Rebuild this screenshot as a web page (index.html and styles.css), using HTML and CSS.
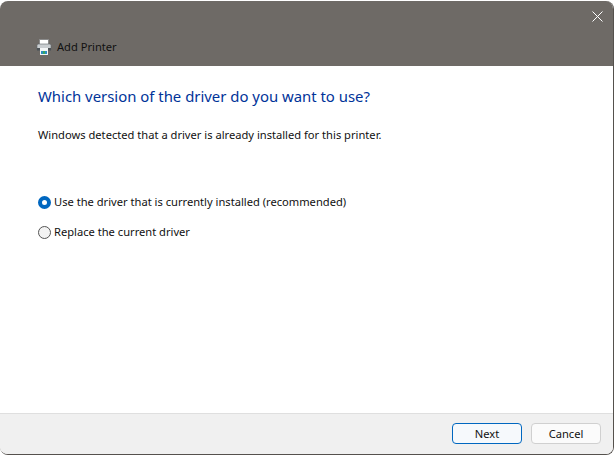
FILE: index.html
```html
<!DOCTYPE html>
<html lang="en">
<head>
<meta charset="utf-8">
<title>Add Printer</title>
<link rel="stylesheet" href="styles.css">
</head>
<body>
<div class="window">
  <header class="titlebar">
    <button class="close" aria-label="Close">
      <svg width="11" height="11" viewBox="0 0 11 11"><path d="M0.5 0.5L10.5 10.5M10.5 0.5L0.5 10.5" stroke="#fff" stroke-width="1" fill="none"/></svg>
    </button>
    <div class="title">
      <svg class="printer" width="16" height="16" viewBox="0 0 16 16">
        <rect x="3.5" y="0.5" width="9" height="5" fill="#fff" stroke="#8a8a8a"/>
        <path d="M1 6.5Q1 5 2.5 5H13.5Q15 5 15 6.5V11H1Z" fill="#c9cdd0" stroke="#5f6468" stroke-width="0.6"/>
        <rect x="1" y="9" width="14" height="2.5" fill="#4d5357"/>
        <rect x="4" y="9" width="8" height="7" fill="#f4f6f7"/>
        <rect x="5" y="12" width="2" height="3" fill="#2a8fc4"/>
        <rect x="7" y="12" width="2" height="3" fill="#3aa561"/>
        <rect x="9" y="12" width="2" height="3" fill="#2a8fc4"/>
      </svg>
      <span>Add Printer</span>
    </div>
  </header>
  <main class="content">
    <h1 class="heading">Which version of the driver do you want to use?</h1>
    <p class="message">Windows detected that a driver is already installed for this printer.</p>
    <div class="options">
      <div class="option"><span class="radio checked"></span><span>Use the driver that is currently installed (recommended)</span></div>
      <div class="option"><span class="radio"></span><span>Replace the current driver</span></div>
    </div>
  </main>
  <footer class="footer">
    <button class="btn primary">Next</button>
    <button class="btn">Cancel</button>
  </footer>
</div>
</body>
</html>
```
FILE: styles.css
```css
* { box-sizing: border-box; }
html, body { margin: 0; height: 100%; background: #fff; }
body { padding: 1px 0 0 0; overflow: hidden; }
.window {
  height: 454px;
  display: flex;
  flex-direction: column;
  background: #fff;
  border-radius: 8px;
  overflow: hidden;
  border-right: 1px solid #55514d;
  border-bottom: 1px solid #55514d;
  font-family: "Noto Sans", sans-serif;
  font-size: 11.15px;
  color: #111;
}
.titlebar {
  height: 65px;
  flex: none;
  background: #6e6a66;
  display: flex;
  flex-direction: column;
  position: relative;
  justify-content: flex-end;
  padding: 0 0 11px 36px;
}
.close {
  position: absolute;
  top: 10px;
  right: 10px;
  width: 11px;
  height: 11px;
  padding: 0;
  border: 0;
  background: none;
  display: flex;
}
.title { display: flex; align-items: center; gap: 5px; color: #111; line-height: 16px; }
.printer { display: block; }
.content { flex: 1; padding: 19px 38px 0; }
.heading { margin: 0; font-size: 14.9px; font-weight: 400; color: #003399; line-height: 22px; }
.message { margin: 20px 0 0; line-height: 16px; }
.options { margin-top: 51px; display: flex; flex-direction: column; gap: 14px; }
.option { display: flex; align-items: center; gap: 3px; line-height: 16px; }
.radio {
  width: 13px;
  height: 13px;
  border-radius: 50%;
  border: 1px solid #555;
  background: #f3f3f3;
  flex: none;
}
.radio.checked { border: 4px solid #0067c0; background: #fff; }
.footer {
  height: 41px;
  flex: none;
  background: #f0f0f0;
  border-top: 1px solid #dfdfdf;
  display: flex;
  justify-content: flex-end;
  align-items: center;
  gap: 9px;
  padding: 0 12px 2px 0;
}
.btn {
  width: 70px;
  height: 21px;
  padding: 0;
  font: inherit;
  color: #111;
  background: #fbfbfb;
  border: 1px solid #d0d0d0;
  border-radius: 4px;
}
.btn.primary { border-color: #0067c0; background: #f6f9fc; }
```
